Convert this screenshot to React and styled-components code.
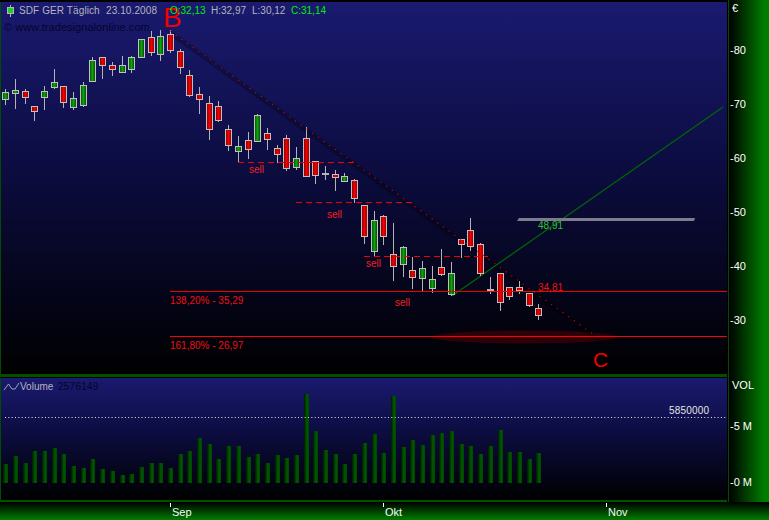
import React from 'react';
import styled, { createGlobalStyle } from 'styled-components';

// x, wick top, wick bottom, body top, body bottom, up?, volume top
const candles = [
  [5, 89, 105, 92, 99, 1, 464], [15, 79, 109, 90, 93, 1, 456], [25, 89, 104, 91, 97, 0, 463],
  [34, 106, 121, 106, 111, 0, 451], [44, 86, 110, 91, 97, 1, 451], [54, 69, 89, 82, 87, 1, 448],
  [63, 86, 108, 86, 102, 0, 454], [73, 92, 110, 98, 107, 1, 466], [83, 82, 107, 85, 105, 1, 468],
  [92, 57, 82, 60, 81, 1, 459], [102, 57, 79, 57, 65, 0, 469], [112, 62, 76, 65, 69, 0, 471],
  [122, 56, 72, 65, 72, 1, 475], [131, 56, 73, 57, 69, 1, 474], [141, 39, 57, 39, 57, 1, 467],
  [151, 31, 56, 37, 52, 0, 463], [160, 30, 61, 36, 54, 1, 463], [170, 30, 53, 34, 50, 0, 468],
  [180, 49, 74, 51, 67, 0, 454], [189, 70, 97, 75, 95, 0, 451], [199, 87, 114, 94, 99, 0, 438],
  [209, 96, 140, 103, 129, 0, 444], [218, 101, 122, 106, 120, 0, 459], [228, 125, 151, 129, 145, 0, 446],
  [238, 136, 163, 146, 151, 1, 446], [248, 132, 159, 140, 149, 0, 457], [257, 114, 142, 115, 141, 1, 454],
  [267, 128, 150, 133, 139, 0, 463], [277, 145, 163, 148, 154, 0, 455], [286, 135, 171, 138, 168, 0, 458],
  [296, 147, 170, 158, 167, 1, 455], [306, 127, 176, 138, 176, 0, 394], [315, 161, 184, 161, 175, 0, 431],
  [325, 166, 180, 173, 173, 2, 450], [335, 170, 191, 174, 177, 0, 454], [344, 173, 181, 176, 181, 1, 464],
  [354, 179, 203, 180, 198, 0, 454], [364, 205, 244, 205, 236, 0, 443], [374, 211, 257, 220, 251, 1, 434],
  [383, 215, 245, 216, 236, 0, 453], [393, 223, 281, 254, 266, 0, 396], [403, 246, 277, 247, 264, 1, 447],
  [412, 257, 289, 270, 277, 0, 440], [422, 261, 291, 268, 278, 1, 445], [432, 266, 293, 279, 288, 1, 435],
  [441, 249, 276, 267, 274, 0, 433], [451, 262, 296, 273, 294, 1, 431], [461, 239, 258, 239, 244, 0, 444],
  [470, 218, 251, 230, 246, 0, 446], [480, 243, 276, 244, 273, 0, 454], [490, 277, 294, 289, 289, 2, 446],
  [500, 273, 311, 273, 302, 0, 430], [509, 287, 300, 287, 296, 0, 452], [519, 281, 294, 287, 290, 0, 452],
  [529, 293, 307, 293, 305, 0, 459], [538, 304, 320, 308, 315, 0, 453],
];

const sellLines = [
  { y: 162, from: 238, to: 355 },
  { y: 202, from: 296, to: 412 },
  { y: 256, from: 364, to: 488 },
];

const sellLabels = [[249, 173], [327, 218], [366, 267], [395, 306]];

const GlobalStyle = createGlobalStyle`
  html, body {
    margin: 0;
    padding: 0;
    background: #000;
  }
`;

const Screen = styled.div`
  width: 769px;
  height: 520px;
  overflow: hidden;
  background: #000;
  display: grid;
  grid-template-columns: 727px 42px;
  grid-template-rows: 375px 125px 18px;
  padding-top: 2px;
  box-sizing: border-box;
  font-family: "Liberation Sans", Arial, sans-serif;
`;

const Panel = styled.div`
  grid-column: 1;
  background: linear-gradient(180deg, #1a1a70 0%, #0c0c40 45%, #000 100%);
  border-left: 1px solid #004c00;
  border-bottom: ${p => p.$edge}px solid #005000;
  margin-top: ${p => p.$gap}px;
  height: ${p => p.$height}px;
  svg {
    display: block;
  }
`;

const Axis = styled.div`
  grid-column: 2;
  grid-row: 1 / span 2;
  margin-top: -2px;
  margin-left: 1px;
  border-left: 1px solid #004c00;
  background: linear-gradient(90deg, #000 0%, #007c00 88%);
  svg {
    display: block;
  }
`;

const TimeBar = styled.div`
  grid-column: 1 / span 2;
  height: 18px;
  background: linear-gradient(180deg, #000 0%, #007c00 100%);
  svg {
    display: block;
  }
`;

const Label = styled.text`
  font-size: ${p => p.$size || 10}px;
  fill: ${p => p.$color || '#b4b4bc'};
  letter-spacing: ${p => p.$spacing || 0}px;
`;

const Crisp = styled.g`
  shape-rendering: crispEdges;
`;

function Candle({ x, wickTop, wickBottom, top, bottom, kind }) {
  if (kind === 2) {
    return (
      <g>
        <rect x={x} y={wickTop} width="1" height={wickBottom - wickTop} fill="#b4b4b4" />
        <rect x={x - 3} y={top} width="7" height="2" fill="#b4b4b4" />
      </g>
    );
  }
  return (
    <g>
      <rect x={x} y={wickTop} width="1" height={wickBottom - wickTop} fill="#b4b4b4" />
      <rect
        x={x - 3 + 0.5}
        y={top + 0.5}
        width="6"
        height={bottom - top}
        fill={kind === 1 ? 'url(#greenBody)' : 'url(#redBody)'}
        stroke="#c0c0c0"
      />
    </g>
  );
}

function PriceChart() {
  return (
    <svg width="726" height="372" viewBox="1 2 726 372">
      <defs>
        <linearGradient id="redBody">
          <stop offset="0" stopColor="#800000" />
          <stop offset="0.5" stopColor="#f00000" />
          <stop offset="1" stopColor="#900000" />
        </linearGradient>
        <linearGradient id="greenBody">
          <stop offset="0" stopColor="#005000" />
          <stop offset="0.5" stopColor="#10a010" />
          <stop offset="1" stopColor="#004000" />
        </linearGradient>
      </defs>

      <ellipse cx="524.5" cy="337" rx="92.5" ry="6.5" fill="#300008" />
      <line x1="172" y1="34" x2="600" y2="341" stroke="#000" strokeOpacity="0.28" strokeWidth="5" />
      <line x1="452" y1="296" x2="723" y2="107" stroke="#006800" strokeWidth="1.2" />

      <Crisp>
        {candles.map(c => (
          <Candle key={c[0]} x={c[0]} wickTop={c[1]} wickBottom={c[2]} top={c[3]} bottom={c[4]} kind={c[5]} />
        ))}
        <rect x="170" y="291" width="557" height="1" fill="#f00000" />
        <rect x="170" y="336" width="557" height="1" fill="#ff0000" />
        {sellLines.map(l => (
          <line key={l.y} x1={l.from} y1={l.y + 0.5} x2={l.to} y2={l.y + 0.5} stroke="#f00000" strokeDasharray="6 4" />
        ))}
      </Crisp>
      <line x1="170" y1="31" x2="597" y2="337" stroke="#f00000" strokeWidth="1.2" strokeDasharray="1 6" />
      <polygon points="519,218 695,218 694,221 517,221" fill="#7c7c8c" />

      {sellLabels.map(([x, y]) => (
        <Label key={x} x={x} y={y} $color="#f02020">sell</Label>
      ))}
      <Label x="538" y="229" $color="#30c030">48,91</Label>
      <Label x="538" y="291" $color="#f01010">34,81</Label>
      <Label x="170" y="304" $color="#f01010">138,20% - 35,29</Label>
      <Label x="170" y="349" $color="#f01010">161,80% - 26,97</Label>
      <Label x="163" y="27" $size={28} $color="#f00000">B</Label>
      <Label x="593" y="367" $size={21} $color="#f00000">C</Label>

      <rect x="10" y="5" width="1" height="12" fill="#b4b4b4" />
      <rect x="7.5" y="7.5" width="6" height="6" fill="#20d020" stroke="#b4b4b4" />
      <Label x="19" y="14" $spacing={0.1}>SDF GER Täglich</Label>
      <Label x="106" y="14" $spacing={0.1}>23.10.2008</Label>
      <Label x="170" y="14" $color="#00ee00">O:32,13</Label>
      <Label x="211" y="14">H:32,97</Label>
      <Label x="252" y="14">L:30,12</Label>
      <Label x="291" y="14" $color="#00ee00">C:31,14</Label>
      <Label x="4" y="31" $size={11} $color="#04042c" $spacing={0.05}>© www.tradesignalonline.com</Label>
    </svg>
  );
}

function VolumeChart() {
  return (
    <svg width="726" height="122" viewBox="1 378 726 122">
      <defs>
        <linearGradient id="volumeBar">
          <stop offset="0" stopColor="#001800" />
          <stop offset="0.6" stopColor="#005c00" />
          <stop offset="1" stopColor="#004400" />
        </linearGradient>
      </defs>
      <Crisp>
        {candles.map(c => (
          <rect key={c[0]} x={c[0] - 2} y={c[6]} width="5" height={483 - c[6]} fill="url(#volumeBar)" />
        ))}
      </Crisp>
      <line x1="5" y1="417.5" x2="727" y2="417.5" stroke="#e8e8e8" strokeDasharray="1 2.33" />
      <path d="M4 390 L8.5 384 L12 389 L15 389 L19 383" fill="none" stroke="#a4a4ac" />
      <Label x="20" y="390">Volume</Label>
      <Label x="58" y="390" $spacing={0.25} $color="#04042c">2576149</Label>
      <Label x="669" y="414" $spacing={0.2} $color="#e4e4e4">5850000</Label>
    </svg>
  );
}

function ValueAxis() {
  return (
    <svg width="40" height="500" viewBox="729 0 40 500">
      <Label x="732" y="12" $size={11} $color="#fff">€</Label>
      {[80, 70, 60, 50, 40, 30].map((v, i) => (
        <Label key={v} x="730" y={54 + i * 54} $size={11} $color="#fff">-{v}</Label>
      ))}
      <Label x="732" y="389" $size={11} $color="#fff">VOL</Label>
      <Label x="730" y="430" $size={11} $color="#fff">-5 M</Label>
      <Label x="730" y="486" $size={11} $color="#fff">-0 M</Label>
    </svg>
  );
}

function TimeAxis() {
  const months = [[170, 'Sep'], [383, 'Okt'], [606, 'Nov']];
  return (
    <svg width="769" height="18" viewBox="0 502 769 18">
      {months.map(([x, name]) => (
        <g key={name}>
          <rect x={x} y="503" width="1" height="4" fill="#fff" shapeRendering="crispEdges" />
          <Label x={x + 2} y="516" $size={11} $color="#f0fff0">{name}</Label>
        </g>
      ))}
    </svg>
  );
}

export default function App() {
  return (
    <Screen>
      <GlobalStyle />
      <Panel $edge={3} $gap={0} $height={372}>
        <PriceChart />
      </Panel>
      <Axis>
        <ValueAxis />
      </Axis>
      <Panel $edge={2} $gap={1} $height={122}>
        <VolumeChart />
      </Panel>
      <TimeBar>
        <TimeAxis />
      </TimeBar>
    </Screen>
  );
}
